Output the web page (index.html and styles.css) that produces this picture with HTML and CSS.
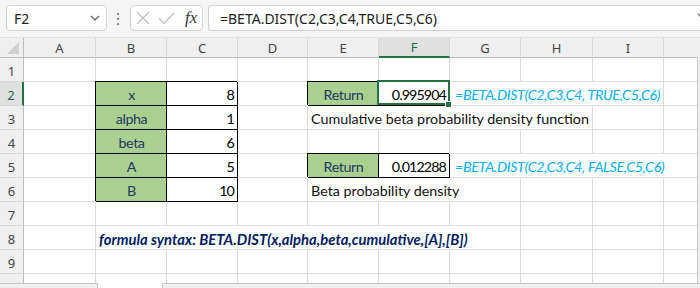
FILE: index.html
```html
<!DOCTYPE html>
<html lang="en">
<head>
    <meta charset="UTF-8">
    <title>BETA.DIST</title>
    <link rel="stylesheet" href="styles.css">
</head>
<body>
<div class="app">
    <div class="toolbar">
        <div class="namebox">
            <span>F2</span>
            <svg class="chev" width="10" height="6" viewBox="0 0 10 6"><path d="M1 1 L5 5 L9 1" fill="none" stroke="#555" stroke-width="1.1"/></svg>
        </div>
        <svg class="dots" width="4" height="14" viewBox="0 0 4 14"><rect x="1" y="1" width="2" height="2" fill="#8a8a8a"/><rect x="1" y="6" width="2" height="2" fill="#8a8a8a"/><rect x="1" y="11" width="2" height="2" fill="#8a8a8a"/></svg>
        <div class="fxbox">
            <svg width="14" height="14" viewBox="0 0 14 14"><path d="M1 1 L13 13 M13 1 L1 13" stroke="#bdbdbd" stroke-width="1.2" fill="none"/></svg>
            <svg width="17" height="13" viewBox="0 0 17 13"><path d="M1 6.5 L6 11.5 L16 1" stroke="#bdbdbd" stroke-width="1.2" fill="none"/></svg>
            <span class="fx">fx</span>
        </div>
        <div class="formula">
            <span>=BETA.DIST(C2,C3,C4,TRUE,C5,C6)</span>
            <svg class="chev" width="10" height="6" viewBox="0 0 10 6"><path d="M1 1 L5 5 L9 1" fill="none" stroke="#555" stroke-width="1.1"/></svg>
        </div>
    </div>

    <div class="sheet-wrap">
        <div class="sheet">
            <div class="h corner"><svg width="14" height="14" viewBox="0 0 14 14"><path d="M1 13 L13 13 L13 1 Z" fill="#d0d0d0"/></svg></div>
            <div class="h">A</div><div class="h">B</div><div class="h">C</div><div class="h">D</div><div class="h">E</div><div class="h sel">F</div><div class="h">G</div><div class="h">H</div><div class="h">I</div><div class="h"></div>

            <div class="rh">1</div>
            <div class="c"></div><div class="c"></div><div class="c"></div><div class="c"></div><div class="c"></div><div class="c"></div><div class="c"></div><div class="c"></div><div class="c"></div><div class="c"></div>

            <div class="rh sel">2</div>
            <div class="c"></div><div class="c bx lab">x</div><div class="c bx num">8</div><div class="c"></div><div class="c bx lab">Return</div><div class="c bx num active">0.995904</div><div class="c note span3">=BETA.DIST(C2,C3,C4, TRUE,C5,C6)</div><div class="c"></div>

            <div class="rh">3</div>
            <div class="c"></div><div class="c bx lab">alpha</div><div class="c bx num">1</div><div class="c"></div><div class="c span4">Cumulative beta probability density function</div><div class="c"></div><div class="c"></div>

            <div class="rh">4</div>
            <div class="c"></div><div class="c bx lab">beta</div><div class="c bx num">6</div><div class="c"></div><div class="c"></div><div class="c"></div><div class="c"></div><div class="c"></div><div class="c"></div><div class="c"></div>

            <div class="rh">5</div>
            <div class="c"></div><div class="c bx lab">A</div><div class="c bx num">5</div><div class="c"></div><div class="c bx lab">Return</div><div class="c bx num">0.012288</div><div class="c note span4">=BETA.DIST(C2,C3,C4, FALSE,C5,C6)</div>

            <div class="rh">6</div>
            <div class="c"></div><div class="c bx lab">B</div><div class="c bx num">10</div><div class="c"></div><div class="c span3">Beta probability density</div><div class="c"></div><div class="c"></div><div class="c"></div>

            <div class="rh">7</div>
            <div class="c"></div><div class="c"></div><div class="c"></div><div class="c"></div><div class="c"></div><div class="c"></div><div class="c"></div><div class="c"></div><div class="c"></div><div class="c"></div>

            <div class="rh">8</div>
            <div class="c"></div><div class="c syn span6">formula syntax: BETA.DIST(x,alpha,beta,cumulative,[A],[B])</div><div class="c"></div><div class="c"></div><div class="c"></div>

            <div class="rh">9</div>
            <div class="c"></div><div class="c"></div><div class="c"></div><div class="c"></div><div class="c"></div><div class="c"></div><div class="c"></div><div class="c"></div><div class="c"></div><div class="c"></div>

            <div class="rh">10</div>
            <div class="c"></div><div class="c"></div><div class="c"></div><div class="c"></div><div class="c"></div><div class="c"></div><div class="c"></div><div class="c"></div><div class="c"></div><div class="c"></div>
        </div>
        <div class="vbar"></div>
    </div>

    <div class="tabs">
        <div class="tab-left"></div>
        <div class="tab-active"></div>
        <div class="tab-rest"></div>
    </div>
</div>
</body>
</html>
```

FILE: styles.css
```css
body { margin: 0; background: #fff; font-family: "Noto Sans", sans-serif; }
.app { width: 700px; height: 288px; overflow: hidden; display: flex; flex-direction: column; }

/* formula bar */
.toolbar { height: 38px; border-bottom: 1px solid #e1e1e1; background: #f5f5f5; display: flex; align-items: flex-start; padding-top: 5px; box-sizing: border-box; }
.namebox { margin-left: 6px; width: 101px; height: 26px; box-sizing: border-box; background: #fff; border: 1px solid #d1d1d1; border-radius: 4px; display: flex; align-items: center; justify-content: space-between; padding: 0 6px 0 7px; font-size: 14px; color: #222; }
.dots { margin: 7px 10px 0 9px; }
.fxbox { width: 73px; height: 26px; box-sizing: border-box; background: #fff; border: 1px solid #d1d1d1; border-radius: 4px; display: flex; align-items: center; padding-left: 5px; gap: 8px; }
.fx { font-family: "Liberation Serif", serif; font-style: italic; font-size: 17px; color: #333; margin-left: 2px; }
.formula { margin-left: 5px; flex: 1; height: 26px; box-sizing: border-box; background: #fff; border: 1px solid #d1d1d1; border-right: none; border-radius: 4px 0 0 4px; display: flex; align-items: center; justify-content: space-between; padding: 0 0 0 11px; font-size: 14px; color: #222; }
.formula .chev { margin-right: -7px; margin-bottom: 4px; }

/* grid */
.sheet-wrap { display: flex; height: 245px; background: #efefef; }
.sheet { width: 697px; overflow: hidden; display: grid; grid-template-columns: 24px 72px 71px 71px 70px 71px 71px 71px 72px 71px 71px; grid-template-rows: 20px repeat(10, 24px); background: #fff; flex: none; }
.vbar { flex: 1; margin-top: 19px; border-left: 1px solid #c8c8c8; background: #f0f0f0; }

.h { background: #efefef; border-right: 1px solid #d8d8d8; border-bottom: 1px solid #bcbcbc; display: flex; align-items: center; justify-content: center; font-size: 13px; color: #444; }
.h.corner { border-right-color: #bcbcbc; align-items: flex-end; justify-content: flex-end; padding: 0 3px 2px 0; }
.h.sel { background: #e0e0e0; color: #1d6b41; border-bottom: 2px solid #217346; }
.rh { background: #efefef; border-right: 1px solid #bcbcbc; border-bottom: 1px solid #d8d8d8; display: flex; align-items: center; justify-content: center; font-size: 13px; color: #444; padding-top: 2px; }
.rh.sel { background: #e0e0e0; color: #1d6b41; border-right: 2px solid #217346; }

.c { border-right: 1px solid #dadada; border-bottom: 1px solid #dadada; display: flex; align-items: flex-end; padding: 0 2px 1px 3px; font-family: Lato, sans-serif; font-size: 14.3px; line-height: 18px; color: #111; white-space: nowrap; min-width: 0; position: relative; }
.span3 { grid-column: span 3; }
.span4 { grid-column: span 4; }
.span6 { grid-column: span 6; }

.bx { border-right-color: #000; border-bottom-color: #000; box-shadow: -1px -1px 0 #000; }
.lab { background: #a9d08e; color: #1f3864; justify-content: center; letter-spacing: -0.4px; }
.num { justify-content: flex-end; color: #000; letter-spacing: -0.9px; padding-right: 3px; }
.note { color: #00b0f0; font-style: italic; padding-left: 5px; letter-spacing: -0.33px; }
.syn { color: #002060; font-weight: bold; font-style: italic; font-size: 14.8px; }

.active::after { content: ""; position: absolute; left: -2px; top: -2px; right: -1px; bottom: 0; border: 2px solid #217346; z-index: 2; }
.active::before { content: ""; position: absolute; right: -3px; bottom: -3px; width: 5px; height: 5px; background: #217346; border: 1px solid #fff; z-index: 3; }

/* sheet tabs */
.tabs { height: 5px; display: flex; background: #f0f0f0; }
.tab-left { width: 97px; border-top: 1px solid #c6c6c6; border-right: 1px solid #c6c6c6; }
.tab-active { width: 64px; background: #fff; }
.tab-rest { flex: 1; border-top: 1px solid #c6c6c6; border-left: 1px solid #c6c6c6; }
```
